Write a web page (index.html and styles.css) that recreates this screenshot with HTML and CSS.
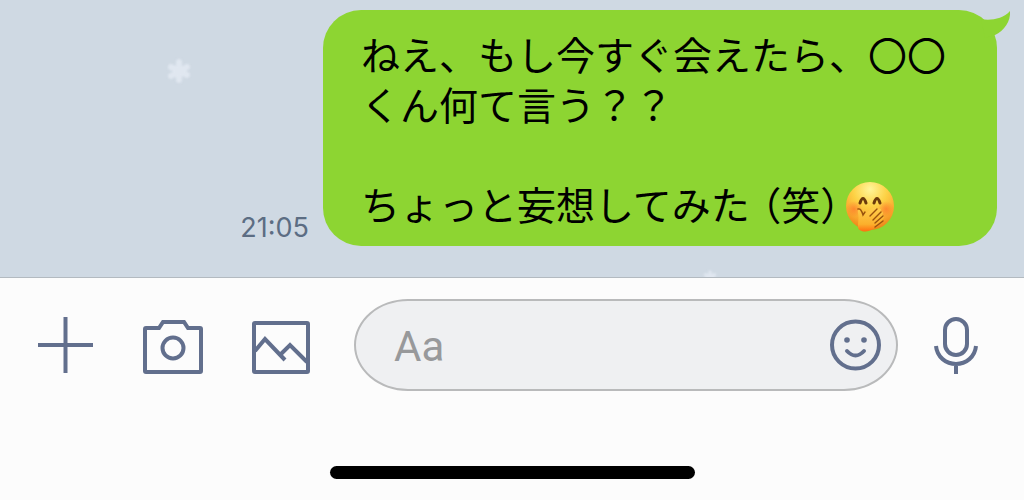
FILE: index.html
```
<!DOCTYPE html>
<html lang="ja">
<head>
    <meta charset="UTF-8">
    <meta name="viewport" content="width=device-width, initial-scale=1.0">
    <title>トーク</title>
    <link rel="stylesheet" href="styles.css">
</head>
<body>
    <main class="chat">
        <svg class="snow snowBig" viewBox="0 0 28 28" aria-hidden="true">
            <path d="M14 5v18M6 10l16 8M6 19l16-9" />
        </svg>
        <svg class="snow snowSmall" viewBox="0 0 28 28" aria-hidden="true">
            <path d="M14 5v18M6 10l16 8M6 19l16-9" />
        </svg>
        <div class="message">
            <time class="time">21:05</time>
            <div class="bubble">
                <p>ねえ、もし今すぐ会えたら、〇〇くん何て言う？？</p>
                <p>ちょっと妄想してみた<span class="laugh">（笑）</span><svg class="emoji" viewBox="0 0 48 50" role="img" aria-label="手で口を押さえた笑顔">
                    <defs>
                        <radialGradient id="face" cx="50%" cy="15%" r="88%">
                            <stop offset="0" stop-color="#fff59a" />
                            <stop offset="0.4" stop-color="#fdd245" />
                            <stop offset="0.75" stop-color="#f9a52c" />
                            <stop offset="1" stop-color="#e87d13" />
                        </radialGradient>
                        <radialGradient id="cheek">
                            <stop offset="0" stop-color="#ff6a2a" stop-opacity="0.6" />
                            <stop offset="1" stop-color="#ff6a2a" stop-opacity="0" />
                        </radialGradient>
                        <linearGradient id="hand" x1="0" y1="0" x2="0" y2="1">
                            <stop offset="0" stop-color="#ffce4d" />
                            <stop offset="0.7" stop-color="#fbb02c" />
                            <stop offset="1" stop-color="#ff6d10" />
                        </linearGradient>
                    </defs>
                    <circle cx="24" cy="24" r="24" fill="url(#face)" />
                    <circle cx="8" cy="27" r="8" fill="url(#cheek)" />
                    <circle cx="40" cy="27" r="8" fill="url(#cheek)" />
                    <path d="M14 21q3-9 6 0M28 21q3-9 6 0" fill="none" stroke="#6b3b0c" stroke-width="3" stroke-linecap="round" />
                    <path d="M12 45c0-6 1-9 0-14-1-4 3-5 4-1l1 3 10-7c3-2 5 1 2 3l3-2c3-1 4 1 2 3 3-1 4 1 2 3 2 0 3 2 1 4L27 47c-5 4-15 3-15-2z" fill="url(#hand)" />
                    <path d="M12 27q3-1 5 6l2-3M24 34l7-7M27 38l8-8M29 41l8-7M29 45l8-6" fill="none" stroke="#99520d" stroke-width="1.4" stroke-linecap="round" />
                </svg></p>
                <svg class="tail" viewBox="0 0 32 28" aria-hidden="true">
                    <path d="M0 9C9 11 22 9 29 1C30 11 23 21 14 25L4 28z" />
                </svg>
            </div>
        </div>
    </main>

    <footer class="footer">
        <form class="inputBar">
            <div class="tools">
                <button type="button" class="iconButton" aria-label="追加">
                    <svg viewBox="0 0 60 60"><path d="M3 30h55M30.500 2v56" /></svg>
                </button>
                <button type="button" class="iconButton" aria-label="カメラ">
                    <svg viewBox="0 0 60 60">
                        <path d="M3 13h13l4-6h21l4 6h12a1 1 0 0 1 1 1v42a1 1 0 0 1-1 1H3a1 1 0 0 1-1-1V14a1 1 0 0 1 1-1z" />
                        <circle cx="30" cy="33" r="10.500" />
                    </svg>
                </button>
                <button type="button" class="iconButton" aria-label="写真">
                    <svg viewBox="0 0 60 60">
                        <rect x="3" y="8" width="54" height="49" rx="1" />
                        <path d="M4 36l10-12 20 21M30 39l9-9 17 17" />
                    </svg>
                </button>
            </div>
            <div class="textBox">
                <input type="text" class="textInput" placeholder="Aa" aria-label="メッセージを入力">
                <button type="button" class="iconButton" aria-label="スタンプ">
                    <svg viewBox="0 0 60 60">
                        <circle cx="29.500" cy="30" r="23.500" />
                        <path d="M21 36q8.500 9 17 0" stroke-linecap="round" />
                        <circle class="dot" cx="21" cy="25" r="2.800" />
                        <circle class="dot" cx="38" cy="25" r="2.800" />
                    </svg>
                </button>
            </div>
            <button type="button" class="iconButton" aria-label="音声">
                <svg viewBox="0 0 60 60">
                    <rect x="19" y="4" width="22" height="36" rx="11" />
                    <path d="M10 31c1 11 10 18 20 18s19-7 20-18M30 49v10" />
                </svg>
            </button>
        </form>
        <div class="homeBar"></div>
    </footer>
</body>
</html>
```
FILE: styles.css
```
* {
    box-sizing: border-box;
}
body {
    display: flex;
    flex-direction: column;
    min-height: 100vh;
    margin: 0;
    background-color: #fcfcfc;
    font-family: Inter, "Noto Sans CJK JP", sans-serif;
}
p {
    margin: 0;
}

/* talk area */
.chat {
    position: relative;
    padding: 10px 27px 31px;
    background-color: #cfd9e3;
}
.message {
    display: flex;
    justify-content: flex-end;
    align-items: flex-end;
    gap: 14px;
}
.time {
    padding-bottom: 3px;
    color: #5c6d83;
    font-size: 27px;
    line-height: 30px;
}
.bubble {
    position: relative;
    max-width: 674px;
    padding: 18px 38px;
    border-radius: 38px;
    background-color: #8dd532;
    color: #000;
    font-family: "Noto Sans CJK JP", sans-serif;
    font-size: 39px;
    line-height: 50px;
}
.bubble p + p {
    margin-top: 50px;
}
.laugh {
    margin: 0 6px 0 12px;
    font-feature-settings: "halt";
}
.emoji {
    width: 48px;
    height: 50px;
    margin: -12px 0 -8px;
    vertical-align: middle;
}
.tail {
    position: absolute;
    top: 0;
    right: -16px;
    width: 32px;
    height: 28px;
    fill: #8dd532;
}
.snow {
    position: absolute;
    fill: none;
    stroke: #e0e7f0;
    stroke-width: 6;
    stroke-linecap: round;
    filter: blur(1px);
}
.snowBig {
    top: 57px;
    left: 165px;
    width: 28px;
}
.snowSmall {
    bottom: -8px;
    left: 702px;
    width: 16px;
    clip-path: inset(0 0 8px 0);
}

/* input area */
.footer {
    flex: 1;
    display: flex;
    flex-direction: column;
    justify-content: space-between;
    align-items: center;
    padding: 21px 0;
    border-top: 1px solid #b3bac0;
}
.inputBar {
    display: flex;
    align-items: center;
    width: 100%;
    padding: 0 38px 0 35px;
}
.tools {
    display: flex;
    gap: 48px;
}
.iconButton {
    flex: none;
    width: 60px;
    height: 60px;
    padding: 0;
    border: none;
    background: none;
    cursor: pointer;
}
.iconButton svg {
    display: block;
    fill: none;
    stroke: #626f8d;
    stroke-width: 4;
}
.iconButton .dot {
    fill: #626f8d;
    stroke: none;
}
.textBox {
    flex: 1;
    display: flex;
    align-items: center;
    min-width: 0;
    height: 92px;
    margin: 0 28px 0 43px;
    padding: 0 10px 0 38px;
    border: 2px solid #b9babb;
    border-radius: 54px / 46px;
    background-color: #eff0f2;
}
.textInput {
    flex: 1;
    min-width: 0;
    padding: 2px 0 0;
    border: none;
    outline: none;
    background: none;
    font-family: Roboto, sans-serif;
    font-size: 42px;
}
.textInput::placeholder {
    color: #98999b;
}
.homeBar {
    width: 365px;
    height: 13px;
    border-radius: 7px;
    background-color: #000;
}
```
